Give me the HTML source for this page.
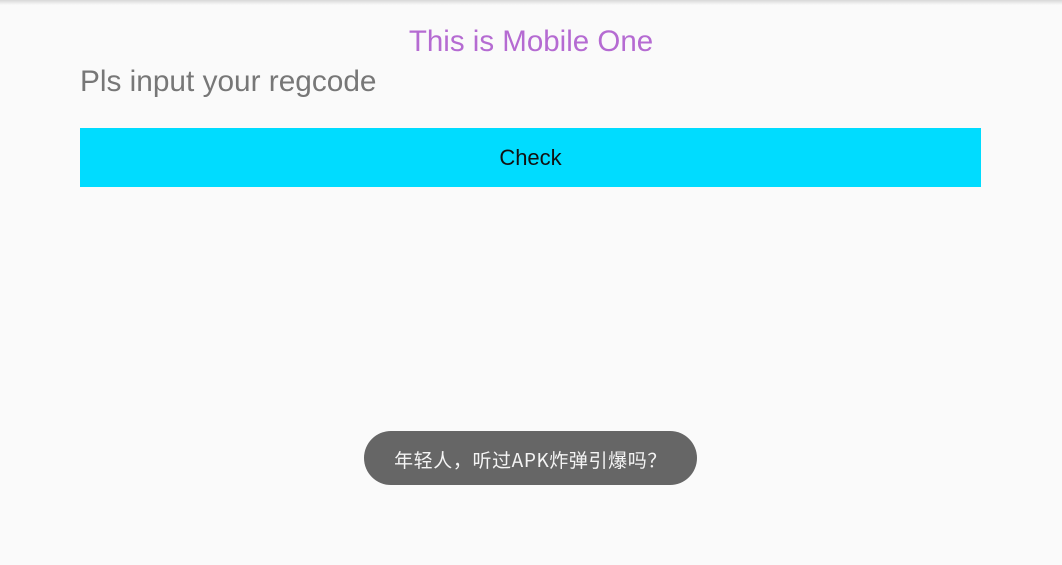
<!DOCTYPE html>
<html><head><meta charset="utf-8"><style>
html,body{margin:0;padding:0;width:1062px;height:565px;background:#fafafa;overflow:hidden;font-family:"Liberation Sans","Noto Sans CJK SC",sans-serif;position:relative}
.sh{position:absolute;left:0;top:0;width:1062px;height:5px;background:linear-gradient(#d8d8d8,#fafafa)}
.t{position:absolute;left:0;width:1062px;text-align:center;top:25px;font-size:29.5px;color:#b56bd2}
.i{position:absolute;left:80px;top:65px;font-size:29.8px;color:#777}
.b{position:absolute;left:80px;top:128px;width:901px;height:59px;background:#00dcff;text-align:center;line-height:60px;font-size:22px;color:#111}
.toast{position:absolute;left:364px;top:431px;width:333px;height:54px;border-radius:27px;background:#666;color:#f4f4f4;text-align:center;line-height:58px;font-size:19px;letter-spacing:0.6px;font-family:"WenQuanYi Zen Hei","Noto Sans CJK SC",sans-serif}
</style></head><body>
<div class="sh"></div>
<div class="t">This is Mobile One</div>
<div class="i">Pls input your regcode</div>
<div class="b">Check</div>
<div class="toast">年轻人，听过APK炸弹引爆吗？</div>
</body></html>
